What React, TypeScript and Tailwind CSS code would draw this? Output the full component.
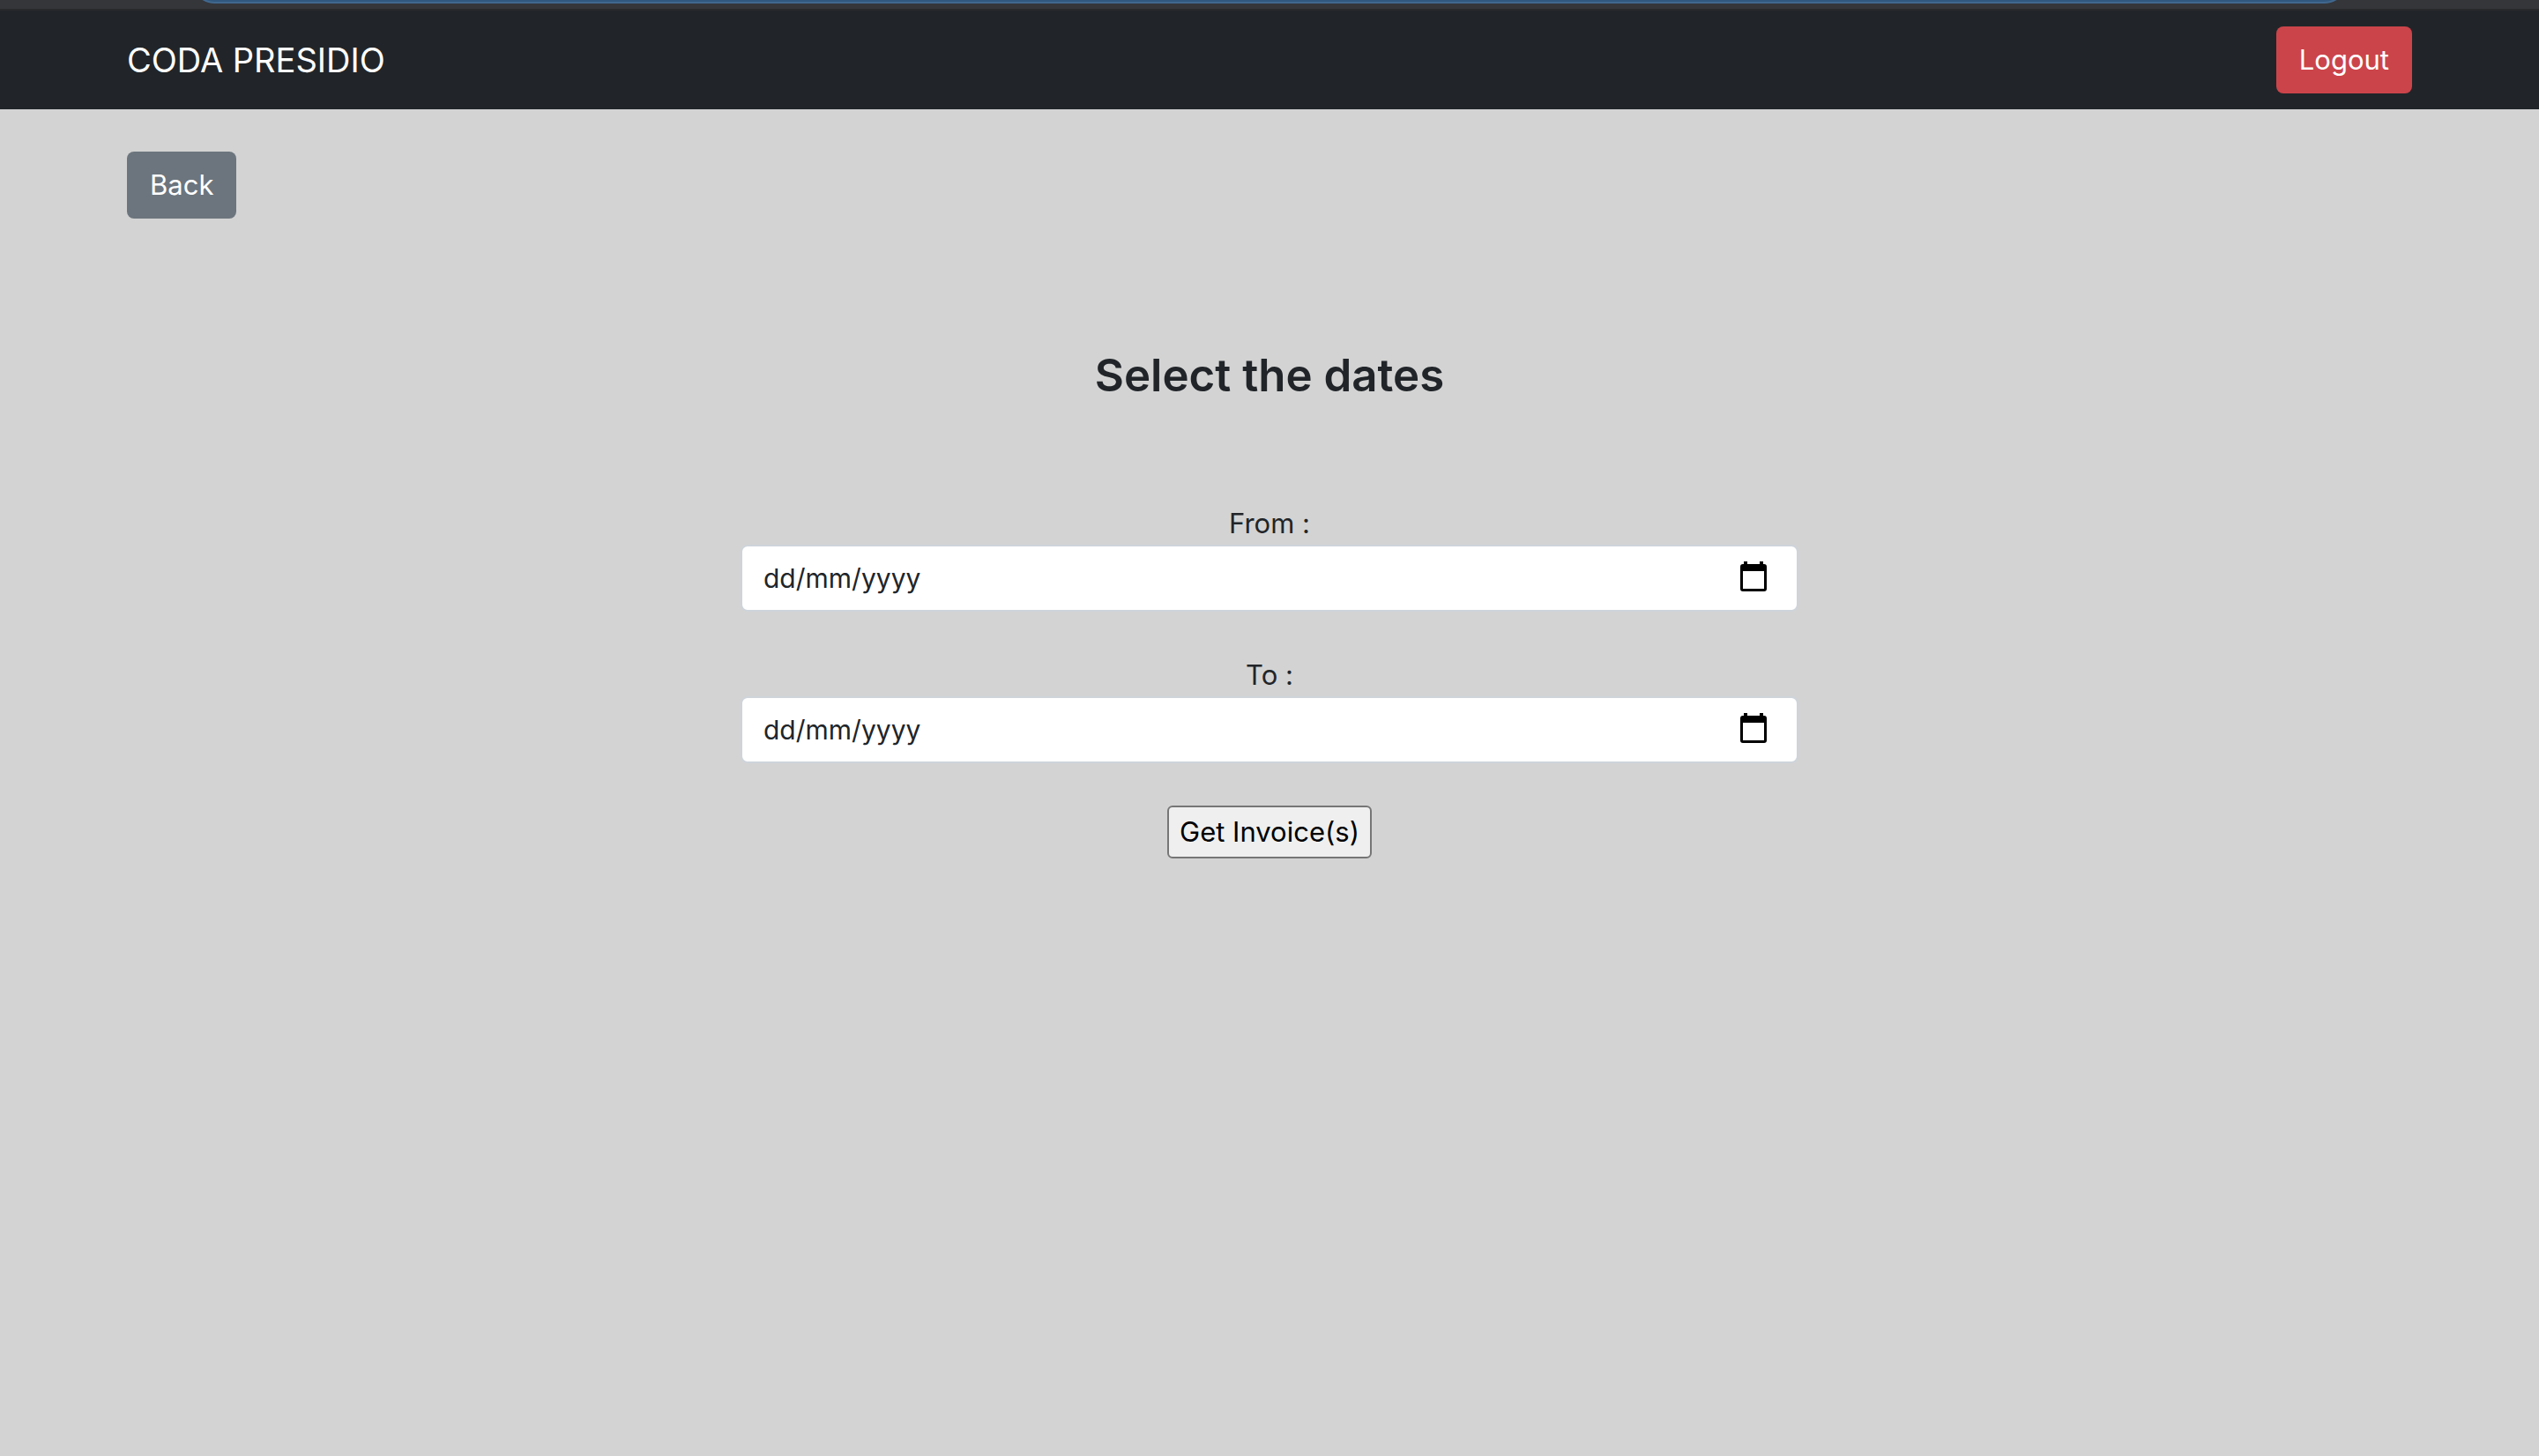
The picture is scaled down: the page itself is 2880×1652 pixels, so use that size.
import React, { useState } from "react";

function CalendarIcon() {
  return (
    <svg viewBox="0 0 30 34" className="h-[34px] w-[30px]" aria-hidden="true">
      <path
        fill="#000"
        fillRule="evenodd"
        d="M4 0h4v3h14V0h4v3h1a3 3 0 0 1 3 3v25a3 3 0 0 1-3 3H3a3 3 0 0 1-3-3V6a3 3 0 0 1 3-3h1zM3 11v20h24V11z"
      />
    </svg>
  );
}

function DateField({ id, label }: { id: string; label: string }) {
  const [value, setValue] = useState("");
  return (
    <div className="mb-12 w-full">
      <label htmlFor={id} className="block text-center">
        {label}
      </label>
      <div className="flex h-[76px] items-center rounded-lg border-2 border-[#ced4da] bg-white pr-[34px] pl-6">
        <input
          id={id}
          type="text"
          placeholder="dd/mm/yyyy"
          value={value}
          onChange={(e) => setValue(e.target.value)}
          className="h-12 min-w-0 flex-1 bg-transparent text-[30px] outline-none placeholder:text-[#212529]"
        />
        <button type="button" aria-label="Open calendar" className="pb-1">
          <CalendarIcon />
        </button>
      </div>
    </div>
  );
}

export default function App() {
  return (
    <div className="min-h-screen bg-[#d3d3d3] font-['Inter',sans-serif] text-[31px] leading-[48px] text-[#212529]">
      <div className="flex h-3 items-end justify-center overflow-hidden border-b-2 border-[#28292b] bg-[#35363a] pb-[6px]">
        <div className="h-14 w-[85%] shrink-0 rounded-full border-2 border-[#41688e] bg-[#30587f]" />
      </div>
      <nav className="flex h-28 items-center justify-between bg-[#212529] px-[5%]">
        <a href="#" className="text-[38px] text-white">
          CODA PRESIDIO
        </a>
        <button type="button" className="h-[76px] rounded-lg bg-[#cb444a] px-[26px] text-white">
          Logout
        </button>
      </nav>
      <main>
        <div className="px-[5%] pt-12">
          <button type="button" className="h-[76px] rounded-lg bg-[#6c757d] px-[26px] text-white">
            Back
          </button>
        </div>
        <form className="mx-auto mt-36 flex w-5/12 flex-col items-center" onSubmit={(e) => e.preventDefault()}>
          <h2 className="mb-[110px] text-[51px] leading-[68px] font-semibold">Select the dates</h2>
          <DateField id="from" label="From :" />
          <DateField id="to" label="To :" />
          <button
            type="submit"
            className="flex h-[60px] items-center rounded-md border-2 border-[#767676] bg-[#efefef] px-3 text-black"
          >
            Get Invoice(s)
          </button>
        </form>
      </main>
    </div>
  );
}
